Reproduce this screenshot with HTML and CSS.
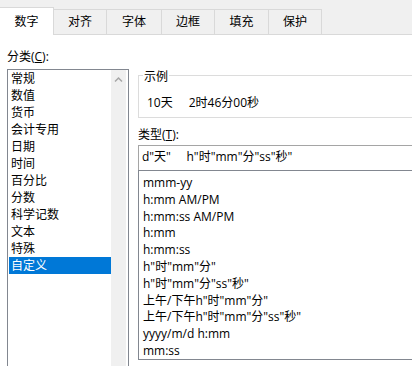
FILE: index.html
```html
<!DOCTYPE html>
<html lang="zh-CN">
<head>
<meta charset="utf-8">
<title>设置单元格格式</title>
<link rel="stylesheet" href="styles.css">
</head>
<body>
<div class="tabs">
  <div class="tab active">数字</div>
  <div class="tab">对齐</div>
  <div class="tab w55">字体</div>
  <div class="tab">边框</div>
  <div class="tab w54">填充</div>
  <div class="tab">保护</div>
  <div class="tab-fill"></div>
</div>
<div class="panel">
  <div class="col-left">
    <div class="label">分类(<u>C</u>):</div>
    <div class="listbox">
      <ul class="items">
        <li>常规</li>
        <li>数值</li>
        <li>货币</li>
        <li>会计专用</li>
        <li>日期</li>
        <li>时间</li>
        <li>百分比</li>
        <li>分数</li>
        <li>科学记数</li>
        <li>文本</li>
        <li>特殊</li>
        <li class="selected">自定义</li>
      </ul>
      <div class="scrollbar">
        <svg class="arrow" width="15" height="17" viewBox="0 0 15 17"><path d="M4 11.5 L7.5 8 L11 11.5" fill="none" stroke="#a6a6a6" stroke-width="1.5"/></svg>
      </div>
    </div>
  </div>
  <div class="col-right">
    <div class="group">
      <div class="legend">示例</div>
      <div class="sample"><span>10天</span><span>2时46分00秒</span></div>
    </div>
    <div class="label type-label">类型(<u>T</u>):</div>
    <div class="input">d"天"     h"时"mm"分"ss"秒"</div>
    <ul class="formats">
      <li>mmm-yy</li>
      <li>h:mm AM/PM</li>
      <li>h:mm:ss AM/PM</li>
      <li>h:mm</li>
      <li>h:mm:ss</li>
      <li>h"时"mm"分"</li>
      <li>h"时"mm"分"ss"秒"</li>
      <li>上午/下午h"时"mm"分"</li>
      <li>上午/下午h"时"mm"分"ss"秒"</li>
      <li>yyyy/m/d h:mm</li>
      <li>mm:ss</li>
    </ul>
  </div>
</div>
</body>
</html>
```
FILE: styles.css
```css
html, body {
  margin: 0;
  padding: 0;
}
body {
  width: 412px;
  height: 366px;
  overflow: hidden;
  background: #fff;
  color: #000;
  font-family: "Open Sans", "Noto Sans CJK SC", sans-serif;
  font-size: 12px;
  line-height: 17px;
}
ul {
  list-style: none;
  margin: 0;
  padding: 0;
}

/* tabs */
.tabs {
  display: flex;
  align-items: flex-end;
  height: 35px;
  background: #f0f0f0;
}
.tab {
  box-sizing: border-box;
  width: 53px;
  height: 26px;
  border: 1px solid #d9d9d9;
  border-left: none;
  line-height: 24px;
  text-align: center;
  flex: none;
}
.tab.w55 { width: 55px; }
.tab.w54 { width: 54px; }
.tab.active {
  width: 54px;
  height: 28px;
  background: #fff;
  border-bottom: none;
  line-height: 27px;
}
.tab-fill {
  flex: 1;
  height: 0;
  border-bottom: 1px solid #d9d9d9;
}

/* panel */
.panel {
  display: flex;
  align-items: flex-start;
  gap: 9px;
  padding: 13px 0 0 7px;
}
.col-left {
  flex: none;
  width: 122px;
}
.listbox {
  box-sizing: border-box;
  margin-top: 4px;
  width: 122px;
  height: 310px;
  border: 1px solid #828790;
  display: flex;
}
.items {
  width: 103px;
  padding-left: 1px;
  box-sizing: border-box;
}
.items li {
  padding-left: 2px;
  height: 17px;
  line-height: 17px;
  white-space: nowrap;
}
.items li.selected {
  background: #0078d7;
  color: #fff;
}
.scrollbar {
  width: 15px;
  background: #f0f0f0;
  margin-right: 2px;
}
.arrow {
  display: block;
}

.col-right {
  flex: none;
  width: 290px;
}
.group {
  margin-top: 27px;
  height: 41px;
  border: 1px solid #dcdcdc;
}
.legend {
  width: fit-content;
  margin: -8px 0 0 4px;
  padding: 0 1px;
  background: #fff;
}
.sample {
  display: flex;
  gap: 16px;
  margin-top: 9px;
  padding-left: 8px;
}
.type-label {
  margin-top: 8px;
}
.input {
  margin-top: 2px;
  height: 24px;
  border: 1px solid #a5a5a5;
  border-bottom: none;
  padding-left: 3px;
  line-height: 22px;
  white-space: pre;
}
.formats {
  box-sizing: border-box;
  height: 190px;
  border: 1px solid #828790;
  padding: 4px 0 0 4px;
}
.formats li {
  height: 16.8px;
  line-height: 16.8px;
  white-space: nowrap;
}
```
